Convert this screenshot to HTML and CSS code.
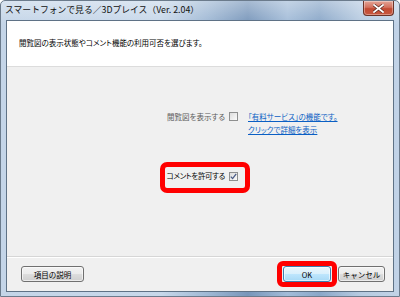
FILE: index.html
```html
<!DOCTYPE html>
<html lang="ja">
    <head>
        <meta charset="UTF-8">
        <title>スマートフォンで見る／3Dプレイス</title>
        <link rel="stylesheet" href="styles.css">
    </head>
    <body>
        <div class="window">
            <div class="titlebar">
                <span class="title">スマートフォンで見る／3Dプレイス（Ver. 2.04）</span>
                <button class="close-btn" aria-label="閉じる">
                    <svg width="11" height="9" viewBox="0 0 11 9">
                        <path d="M1 1 L10 8 M10 1 L1 8" stroke="#5a2a22" stroke-width="3.2" stroke-linecap="square"/>
                        <path d="M1 1 L10 8 M10 1 L1 8" stroke="#ffffff" stroke-width="1.8" stroke-linecap="square"/>
                    </svg>
                </button>
            </div>

            <div class="client">
                <div class="header">
                    <p>閲覧図の表示状態やコメント機能の利用可否を選びます。</p>
                </div>

                <div class="main">
                    <div class="options">
                        <label class="option disabled">閲覧図を表示する<span class="check"></span></label>
                        <div class="paid-note">
                            <a href="#">「有料サービス」の機能です。</a><br>
                            <a href="#">クリックで詳細を表示</a>
                        </div>

                        <div class="highlight">
                            <label class="option">コメントを許可する<span class="check">
                                <svg width="7" height="7" viewBox="0 0 7 7">
                                    <path d="M0.8 3.6 L2.6 5.6 L6.2 0.8" fill="none" stroke="#4a5b86" stroke-width="1.3"/>
                                </svg>
                            </span></label>
                        </div>
                    </div>
                </div>

                <div class="footer">
                    <button class="btn btn-help">項目の説明</button>
                    <div class="footer-right">
                        <div class="highlight-btn">
                            <button class="btn btn-default">OK</button>
                        </div>
                        <button class="btn">キャンセル</button>
                    </div>
                </div>
            </div>
        </div>
    </body>
</html>
```

FILE: styles.css
```css
:root {
    --client-border: #5f7286;
    --panel: #f0f0f0;
    --link: #0a5fc4;
    --mark: #ff0000;
    --font: "Noto Sans CJK JP", "Liberation Sans", sans-serif;
}

* {
    margin: 0;
    padding: 0;
    box-sizing: border-box;
}

body {
    font-family: var(--font);
    font-size: 7.5px;
    font-feature-settings: "palt";
    color: #000;
    width: 400px;
    height: 297px;
    overflow: hidden;
}

.window {
    width: 400px;
    height: 297px;
    display: flex;
    flex-direction: column;
    border: 1px solid #6b7b8c;
    border-radius: 5px 5px 0 0;
    background:
        linear-gradient(to bottom, rgba(255, 255, 255, 0.35), rgba(255, 255, 255, 0) 8%),
        linear-gradient(to right, #c4d5e8 0%, #c8d8ea 40%, #9fb8d4 52%, #7896ba 62%, #a3bcd8 72%, #8aa7c8 80%, #b6cae0 90%, #c2d3e7 100%);
}

.titlebar {
    height: 19px;
    display: flex;
    align-items: flex-start;
    padding-left: 4px;
}

.title {
    font-size: 8.8px;
    font-feature-settings: normal;
    line-height: 10px;
    margin-top: 4px;
    color: #111;
}

.close-btn {
    margin-left: auto;
    margin-right: 5px;
    width: 31px;
    height: 15px;
    border: 1px solid #6b3328;
    border-top: none;
    border-radius: 0 0 4px 4px;
    background: linear-gradient(to bottom, #e3a597 0%, #d3715e 45%, #c24a32 55%, #c7573f 100%);
    box-shadow: inset 0 0 0 1px rgba(255, 255, 255, 0.35);
    display: flex;
    align-items: center;
    justify-content: center;
}

.client {
    flex: 1;
    margin: 0 5px 4px 5px;
    border: 1px solid var(--client-border);
    background: var(--panel);
    display: flex;
    flex-direction: column;
}

.header {
    height: 46px;
    background: #fff;
    border-bottom: 1px solid #dcdcdc;
    padding: 17px 0 0 12px;
}

.header p {
    line-height: 10px;
}

.main {
    flex: 1;
}

.options {
    display: grid;
    grid-template-columns: 231px 1fr;
    column-gap: 10px;
    row-gap: 26px;
    padding-top: 43px;
    align-items: start;
}

.option {
    justify-self: end;
    display: flex;
    align-items: center;
    line-height: 13px;
}

.option.disabled {
    color: #5a5a5a;
}

.check {
    width: 9px;
    height: 9px;
    margin-left: 4px;
    border: 1px solid #8e8f8f;
    background: linear-gradient(to bottom right, #dcdcdc, #fbfbfb);
    display: flex;
    align-items: center;
    justify-content: center;
}

.paid-note {
    line-height: 13px;
}

.paid-note a {
    color: var(--link);
}

.highlight {
    grid-column: 1;
    justify-self: end;
    margin-right: -12px;
    border: 5px solid var(--mark);
    border-radius: 7px;
    padding: 2px 7px 5px 2px;
}

.highlight .option {
    line-height: 14px;
    letter-spacing: -0.35px;
    color: #000;
}

.footer {
    height: 35px;
    border-top: 1px solid #d6d6d6;
    box-shadow: inset 0 1px 0 #fff;
    padding: 9px 8px 0 14px;
    display: flex;
    align-items: flex-start;
}

.footer-right {
    margin-left: auto;
    display: flex;
    gap: 7px;
}

.btn {
    font-family: var(--font);
    font-size: 7.5px;
    height: 16px;
    border: 1px solid #707070;
    border-radius: 3px;
    background: linear-gradient(to bottom, #f2f2f2 0%, #ebebeb 50%, #dddddd 51%, #cfcfcf 100%);
    box-shadow: inset 0 0 0 1px rgba(255, 255, 255, 0.6);
    color: #000;
    cursor: pointer;
    width: 47px;
}

.btn-help {
    width: 63px;
}

.btn-default {
    width: 48px;
    border-color: #3c7fb1;
    background: linear-gradient(to bottom, #eaf6fd 0%, #d9f0fc 50%, #bee6fd 51%, #a7d9f5 100%);
}

.highlight-btn {
    display: flex;
    margin: -5px -6px;
    padding: 0 1px;
    border: 5px solid var(--mark);
    border-radius: 6px;
}
```
